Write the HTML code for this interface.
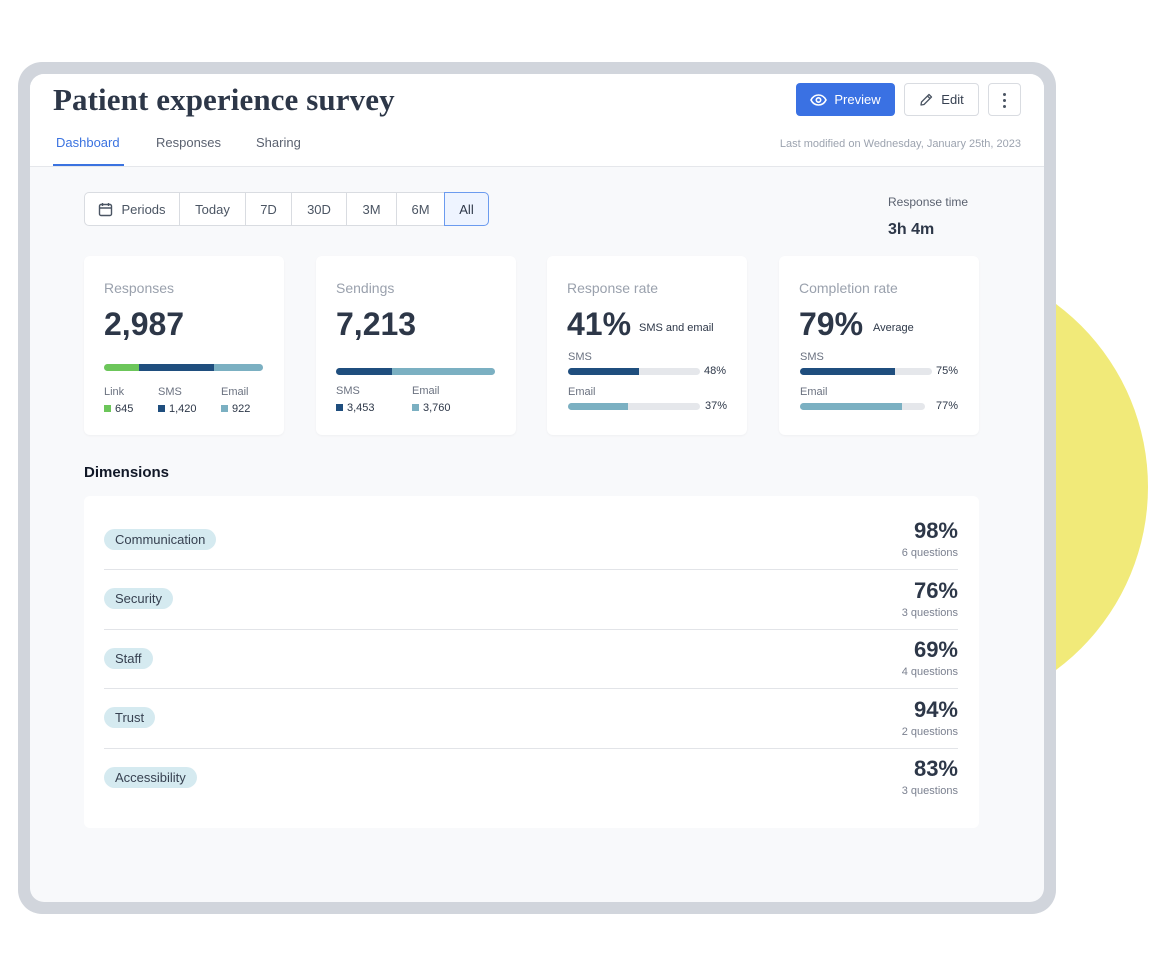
<!DOCTYPE html>
<html><head><meta charset="utf-8"><style>
*{box-sizing:border-box;margin:0;padding:0}
body{width:1156px;height:974px;background:#fff;position:relative;overflow:hidden;font-family:"Liberation Sans",sans-serif;color:#2d3748}
.abs{position:absolute}
.blob{position:absolute;left:692px;top:259px;width:456px;height:456px;border-radius:50%;background:#f1ea79}
.frame{position:absolute;left:18px;top:62px;width:1038px;height:852px;border-radius:24px;background:#d1d5dc}
.inner{position:absolute;left:30px;top:74px;width:1014px;height:828px;border-radius:14px;background:#f8f9fb;overflow:hidden}
.hdr{position:absolute;left:0;top:0;width:1014px;height:93px;background:#fff;border-bottom:1px solid #e5e7eb}
.t{position:absolute;white-space:nowrap}
.card{position:absolute;top:256px;width:200px;height:179px;background:#fff;border-radius:6px;box-shadow:0 1px 2px rgba(0,0,0,.04)}
.ct{position:absolute;left:20px;top:24px;font-size:14px;color:#9aa1ad}
.big{position:absolute;left:20px;top:50px;font-size:32px;font-weight:bold;color:#2d3748}
.lbl{font-size:11px;color:#6b7280}
.val{font-size:11px;color:#2d3748}
.sq{display:inline-block;width:7px;height:7px;margin-right:4px;vertical-align:0}
.bar{position:absolute;height:7px;border-radius:4px;overflow:hidden;background:#e5e7eb}
.bar i{position:absolute;top:0;height:7px}
.seg{position:absolute;top:192px;height:34px;border:1px solid #d9dce1;background:#fff;font-size:13px;color:#4b5563;display:flex;align-items:center;justify-content:center}
.pill{position:absolute;left:20px;height:21px;line-height:21px;padding:0 11px;border-radius:11px;background:#d5eaf0;font-size:13px;color:#374151}
.pct{position:absolute;right:21px;font-size:22px;font-weight:bold;color:#2d3748}
.q{position:absolute;right:21px;font-size:11px;color:#7b8190}
.dv{position:absolute;left:20px;right:21px;height:1px;background:#e2e4e8}
</style></head><body>
<div class="blob"></div>
<div class="frame"></div>
<div class="inner">
 <div class="hdr">
  <div class="t" style="left:23px;top:8px;font-family:'Liberation Serif',serif;font-size:31px;font-weight:bold;color:#2d3748;letter-spacing:0.1px">Patient experience survey</div>
  <div class="t" style="left:26px;top:61px;font-size:13px;color:#3b73e0">Dashboard</div>
  <div class="abs" style="left:23px;top:90px;width:71px;height:2px;background:#3b73e0"></div>
  <div class="t" style="left:126px;top:61px;font-size:13px;color:#5b6270">Responses</div>
  <div class="t" style="left:226px;top:61px;font-size:13px;color:#5b6270">Sharing</div>
  <div class="abs" style="left:766px;top:9px;width:99px;height:33px;background:#3a71e3;border-radius:4px;color:#fff;font-size:13px;display:flex;align-items:center;justify-content:center;gap:7px">
   <svg width="17" height="12" viewBox="0 0 17 12"><path d="M1 6C3 2 6 1 8.5 1S14 2 16 6C14 10 11 11 8.5 11S3 10 1 6Z" fill="none" stroke="#fff" stroke-width="1.6"/><circle cx="8.5" cy="6" r="2.2" fill="none" stroke="#fff" stroke-width="1.6"/></svg>Preview</div>
  <div class="abs" style="left:874px;top:9px;width:75px;height:33px;background:#fff;border:1px solid #d9dce1;border-radius:4px;font-size:13px;color:#374151;display:flex;align-items:center;justify-content:center;gap:8px">
   <svg width="14" height="14" viewBox="0 0 14 14"><path d="M2 12L2.5 9L10 1.5L12.5 4L5 11.5Z M8.5 3L11 5.5" fill="none" stroke="#4b5563" stroke-width="1.3" stroke-linejoin="round"/></svg>Edit</div>
  <div class="abs" style="left:958px;top:9px;width:33px;height:33px;background:#fff;border:1px solid #d9dce1;border-radius:4px">
   <div class="abs" style="left:14px;top:9px;width:3px;height:3px;border-radius:2px;background:#4b5563"></div>
   <div class="abs" style="left:14px;top:15px;width:3px;height:3px;border-radius:2px;background:#4b5563"></div>
   <div class="abs" style="left:14px;top:21px;width:3px;height:3px;border-radius:2px;background:#4b5563"></div>
  </div>
  <div class="t" style="right:23px;top:64px;font-size:11px;color:#9ca3af">Last modified on Wednesday, January 25th, 2023</div>
 </div>
</div>
<div class="seg" style="left:84px;width:96px;border-radius:5px 0 0 5px;gap:8px"><svg width="15" height="15" viewBox="0 0 15 15"><rect x="1.5" y="2.5" width="12" height="11" rx="1.5" fill="none" stroke="#4b5563" stroke-width="1.4"/><path d="M1.5 6H13.5M4.5 1V4M10.5 1V4" stroke="#4b5563" stroke-width="1.4"/></svg>Periods</div>
<div class="seg" style="left:179px;width:67px">Today</div>
<div class="seg" style="left:245px;width:47px">7D</div>
<div class="seg" style="left:291px;width:56px">30D</div>
<div class="seg" style="left:346px;width:51px">3M</div>
<div class="seg" style="left:396px;width:49px">6M</div>
<div class="seg" style="left:444px;width:45px;border-color:#6b9bef;background:#eef4ff;border-radius:0 5px 5px 0;color:#2d3748">All</div>
<div class="t" style="left:888px;top:195px;font-size:12px;color:#5b6270">Response time</div>
<div class="t" style="left:888px;top:221px;font-size:16px;font-weight:bold;color:#2d3748">3h 4m</div>

<div class="card" style="left:84px">
 <div class="ct">Responses</div><div class="big">2,987</div>
 <div class="bar" style="left:20px;top:108px;width:159px"><i style="left:0;width:35px;background:#6cc65a"></i><i style="left:35px;width:75px;background:#1f4e7e"></i><i style="left:110px;width:49px;background:#7bb0c2"></i></div>
 <div class="t lbl" style="left:20px;top:130px">Link</div><div class="t lbl" style="left:74px;top:130px">SMS</div><div class="t lbl" style="left:137px;top:130px">Email</div>
 <div class="t val" style="left:20px;top:147px"><span class="sq" style="background:#6cc65a"></span>645</div>
 <div class="t val" style="left:74px;top:147px"><span class="sq" style="background:#1f4e7e"></span>1,420</div>
 <div class="t val" style="left:137px;top:147px"><span class="sq" style="background:#7bb0c2"></span>922</div>
</div>
<div class="card" style="left:316px">
 <div class="ct">Sendings</div><div class="big">7,213</div>
 <div class="bar" style="left:20px;top:112px;width:159px"><i style="left:0;width:56px;background:#1f4e7e"></i><i style="left:56px;width:103px;background:#7bb0c2"></i></div>
 <div class="t lbl" style="left:20px;top:129px">SMS</div><div class="t lbl" style="left:96px;top:129px">Email</div>
 <div class="t val" style="left:20px;top:146px"><span class="sq" style="background:#1f4e7e"></span>3,453</div>
 <div class="t val" style="left:96px;top:146px"><span class="sq" style="background:#7bb0c2"></span>3,760</div>
</div>
<div class="card" style="left:547px">
 <div class="ct">Response rate</div><div class="big">41%</div>
 <div class="t val" style="left:92px;top:66px">SMS and email</div>
 <div class="t lbl" style="left:21px;top:95px">SMS</div>
 <div class="bar" style="left:21px;top:112px;width:132px"><i style="left:0;width:71px;background:#1f4e7e"></i></div>
 <div class="t val" style="left:157px;top:109px">48%</div>
 <div class="t lbl" style="left:21px;top:130px">Email</div>
 <div class="bar" style="left:21px;top:147px;width:132px"><i style="left:0;width:60px;background:#7bb0c2"></i></div>
 <div class="t val" style="left:158px;top:144px">37%</div>
</div>
<div class="card" style="left:779px">
 <div class="ct">Completion rate</div><div class="big">79%</div>
 <div class="t val" style="left:94px;top:66px">Average</div>
 <div class="t lbl" style="left:21px;top:95px">SMS</div>
 <div class="bar" style="left:21px;top:112px;width:132px"><i style="left:0;width:95px;background:#1f4e7e"></i></div>
 <div class="t val" style="left:157px;top:109px">75%</div>
 <div class="t lbl" style="left:21px;top:130px">Email</div>
 <div class="bar" style="left:21px;top:147px;width:125px"><i style="left:0;width:102px;background:#7bb0c2"></i></div>
 <div class="t val" style="left:157px;top:144px">77%</div>
</div>

<div class="t" style="left:84px;top:464px;font-size:15px;font-weight:bold;color:#111827">Dimensions</div>
<div class="abs" style="left:84px;top:496px;width:895px;height:332px;background:#fff;border-radius:6px">
 <div class="pill" style="top:33px">Communication</div><div class="pct" style="top:22px">98%</div><div class="q" style="top:51px">6 questions</div>
 <div class="dv" style="top:73px"></div>
 <div class="pill" style="top:92px">Security</div><div class="pct" style="top:82px">76%</div><div class="q" style="top:111px">3 questions</div>
 <div class="dv" style="top:133px"></div>
 <div class="pill" style="top:152px">Staff</div><div class="pct" style="top:141px">69%</div><div class="q" style="top:170px">4 questions</div>
 <div class="dv" style="top:192px"></div>
 <div class="pill" style="top:211px">Trust</div><div class="pct" style="top:201px">94%</div><div class="q" style="top:230px">2 questions</div>
 <div class="dv" style="top:252px"></div>
 <div class="pill" style="top:271px">Accessibility</div><div class="pct" style="top:260px">83%</div><div class="q" style="top:289px">3 questions</div>
</div>
</body></html>
